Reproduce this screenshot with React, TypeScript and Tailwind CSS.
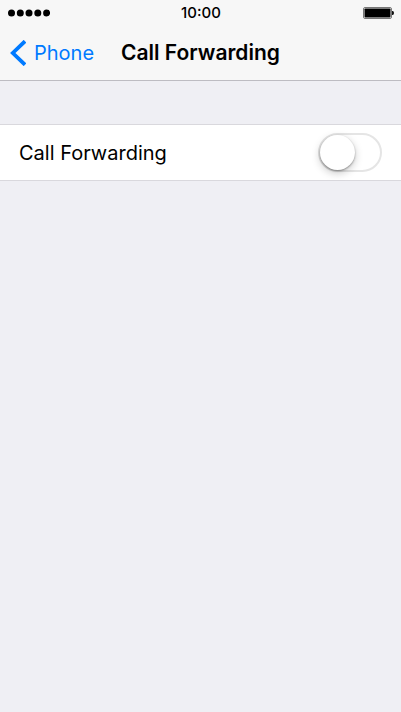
import { useState } from 'react'

function SignalDots() {
  return (
    <svg width="42" height="8" viewBox="0 0 42 8" role="img" aria-label="Signal strength">
      {[3.5, 12.3, 21, 29.8, 38.6].map((cx) => (
        <circle key={cx} cx={cx} cy="4" r="3.5" fill="#000" />
      ))}
    </svg>
  )
}

function Battery() {
  return (
    <svg width="31" height="12" viewBox="0 0 31 12" role="img" aria-label="Battery full">
      <rect x="0.5" y="0.5" width="28" height="11" rx="1.5" fill="#f7f7f7" stroke="#777" />
      <rect x="1.5" y="1.5" width="26" height="9" rx="0.8" fill="#000" />
      <path d="M29 4h0.6a1.4 2 0 0 1 0 4H29z" fill="#111" />
    </svg>
  )
}

function StatusBar() {
  return (
    <div className="grid h-[26px] grid-cols-[1fr_auto_1fr] items-center pr-[7px] pl-2">
      <SignalDots />
      <span className="text-[15px] leading-5 font-medium">10:00</span>
      <div className="flex justify-end">
        <Battery />
      </div>
    </div>
  )
}

function NavBar() {
  return (
    <nav className="grid h-[54px] grid-cols-[1fr_auto_1fr] items-center px-2.5">
      <a href="#phone" className="flex items-center gap-2 text-xl text-[#007aff]">
        <svg width="16" height="26" viewBox="0 0 16 26" fill="none" aria-hidden="true">
          <path d="M15 1.2L2.8 13L15 24.8" stroke="currentColor" strokeWidth="3.8" />
        </svg>
        Phone
      </a>
      <h1 className="text-[21px] leading-7 font-semibold">Call Forwarding</h1>
    </nav>
  )
}

export default function App() {
  const [forwarding, setForwarding] = useState(false)

  return (
    <div className="min-h-screen bg-[#efeff4] font-['Inter',sans-serif] text-black">
      <header className="border-b border-[#bdbcc2] bg-[#f7f7f7]">
        <StatusBar />
        <NavBar />
      </header>

      <main className="pt-[43px]">
        <div className="flex h-[57px] items-center justify-between border-y border-[#d9d8dd] bg-white px-[19px]">
          <label htmlFor="call-forwarding" className="text-xl">
            Call Forwarding
          </label>
          <input
            id="call-forwarding"
            type="checkbox"
            role="switch"
            checked={forwarding}
            onChange={(e) => setForwarding(e.target.checked)}
            className="flex h-[39px] w-16 appearance-none items-center rounded-full border-2 border-[#e5e5e5] bg-white before:size-[35px] before:rounded-full before:bg-white before:shadow-[0_3px_8px_rgba(0,0,0,0.22),0_1px_2px_rgba(0,0,0,0.35)] before:transition-transform checked:border-[#4cd964] checked:bg-[#4cd964] checked:before:translate-x-[25px]"
          />
        </div>
      </main>
    </div>
  )
}
